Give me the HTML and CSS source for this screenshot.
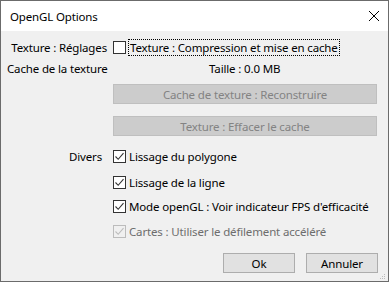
FILE: index.html
```html
<!DOCTYPE html>
<html lang="fr">
<head>
  <meta charset="UTF-8">
  <title>OpenGL Options</title>
  <link rel="stylesheet" href="styles.css">
</head>
<body>
  <div class="window">
    <div class="titlebar">
      <span class="title">OpenGL Options</span>
      <svg class="close" width="12" height="12" viewBox="0 0 12 12">
        <path d="M1 1 L11 11 M11 1 L1 11" stroke="#000" stroke-width="1" fill="none"/>
      </svg>
    </div>

    <div class="content">
      <div class="row row-first">
        <span class="label">Texture : Réglages</span>
        <label class="check focus">
          <span class="box"></span>
          <span>Texture : Compression et mise en cache</span>
        </label>
      </div>

      <div class="row row-cache">
        <span class="label label-left">Cache de la texture</span>
        <span class="size">Taille : 0.0 MB</span>
      </div>

      <div class="row row-btn1">
        <span class="label"></span>
        <button class="wide" disabled>Cache de texture : Reconstruire</button>
      </div>

      <div class="row row-btn2">
        <span class="label"></span>
        <button class="wide" disabled>Texture : Effacer le cache</button>
      </div>

      <div class="row row-divers">
        <span class="label label-divers">Divers</span>
        <label class="check">
          <span class="box"><svg viewBox="0 0 11 11" width="11" height="11"><path d="M1.5 5.5 L4.2 8.3 L9.5 2.2" stroke="#333" stroke-width="1.1" fill="none"/></svg></span>
          <span>Lissage du polygone</span>
        </label>
      </div>

      <div class="row row-line">
        <span class="label"></span>
        <label class="check">
          <span class="box"><svg viewBox="0 0 11 11" width="11" height="11"><path d="M1.5 5.5 L4.2 8.3 L9.5 2.2" stroke="#333" stroke-width="1.1" fill="none"/></svg></span>
          <span>Lissage de la ligne</span>
        </label>
      </div>

      <div class="row row-fps">
        <span class="label"></span>
        <label class="check">
          <span class="box"><svg viewBox="0 0 11 11" width="11" height="11"><path d="M1.5 5.5 L4.2 8.3 L9.5 2.2" stroke="#333" stroke-width="1.1" fill="none"/></svg></span>
          <span>Mode openGL : Voir indicateur FPS d'efficacité</span>
        </label>
      </div>

      <div class="row row-maps">
        <span class="label"></span>
        <label class="check disabled">
          <span class="box"><svg viewBox="0 0 11 11" width="11" height="11"><path d="M1.5 5.5 L4.2 8.3 L9.5 2.2" stroke="#bcbcbc" stroke-width="1.1" fill="none"/></svg></span>
          <span>Cartes : Utiliser le défilement accéléré</span>
        </label>
      </div>

      <div class="footer">
        <button class="small">Ok</button>
        <button class="small">Annuler</button>
      </div>
    </div>

    <svg class="grip" width="6" height="6" viewBox="0 0 6 6">
      <rect x="4" y="0" width="1" height="1" fill="#bcbcbc"/>
      <rect x="2" y="2" width="1" height="1" fill="#bcbcbc"/>
      <rect x="4" y="2" width="1" height="1" fill="#bcbcbc"/>
      <rect x="0" y="4" width="1" height="1" fill="#bcbcbc"/>
      <rect x="2" y="4" width="1" height="1" fill="#bcbcbc"/>
      <rect x="4" y="4" width="1" height="1" fill="#bcbcbc"/>
    </svg>
  </div>
</body>
</html>
```

FILE: styles.css
```css
body {
  margin: 0;
  padding: 0;
  font-family: "Noto Sans", "Open Sans", sans-serif;
  font-size: 11.5px;
  letter-spacing: -0.15px;
  color: #000;
  background-color: #f0f0f0;
}

.window {
  position: relative;
  width: 387px;
  height: 280px;
  border: 1px solid #6b6b6b;
  background-color: #f0f0f0;
  display: flex;
  flex-direction: column;
}

.titlebar {
  height: 30px;
  background-color: #fff;
  display: flex;
  align-items: center;
  justify-content: space-between;
  padding: 0 8px 0 9px;
}

.content {
  padding-top: 6px;
  padding-right: 10px;
  display: flex;
  flex-direction: column;
}

.row {
  display: flex;
  align-items: center;
  height: 20px;
}

.label {
  width: 112px;
  flex-shrink: 0;
  text-align: right;
  padding-right: 6px;
  box-sizing: border-box;
  white-space: nowrap;
}

.label-left {
  text-align: left;
  padding-left: 6px;
}

.label-divers {
  padding-right: 11px;
}

.row-cache {
  margin-top: 1px;
}

.row-btn1 {
  margin-top: 6px;
}

.row-btn2 {
  margin-top: 12px;
}

.row-divers {
  margin-top: 10px;
}

.row-line {
  margin-top: 6px;
}

.row-fps {
  margin-top: 4px;
}

.row-maps {
  margin-top: 5px;
}

.size {
  margin-left: 96px;
}

.check {
  display: flex;
  align-items: center;
  gap: 3px;
  white-space: nowrap;
}

.box {
  width: 11px;
  height: 11px;
  border: 1px solid #333;
  background-color: #fff;
  display: flex;
}

.focus span:last-child {
  outline: 1px dotted #000;
  outline-offset: 0;
  padding: 0 1px;
}

.disabled {
  color: #6d6d6d;
}

.disabled .box {
  border-color: #bcbcbc;
  background-color: #f0f0f0;
}

button {
  font-family: inherit;
  font-size: 11.5px;
  letter-spacing: -0.15px;
  height: 20px;
  padding: 0;
  box-sizing: border-box;
}

.wide {
  width: 264px;
  background-color: #cccccc;
  border: 1px solid #bfbfbf;
  color: #838383;
}

.footer {
  display: flex;
  justify-content: flex-end;
  gap: 11px;
  margin-top: 12px;
}

.small {
  width: 72px;
  background-color: #e1e1e1;
  border: 1px solid #adadad;
  color: #000;
}

.grip {
  position: absolute;
  right: 2px;
  bottom: 1px;
}
```
